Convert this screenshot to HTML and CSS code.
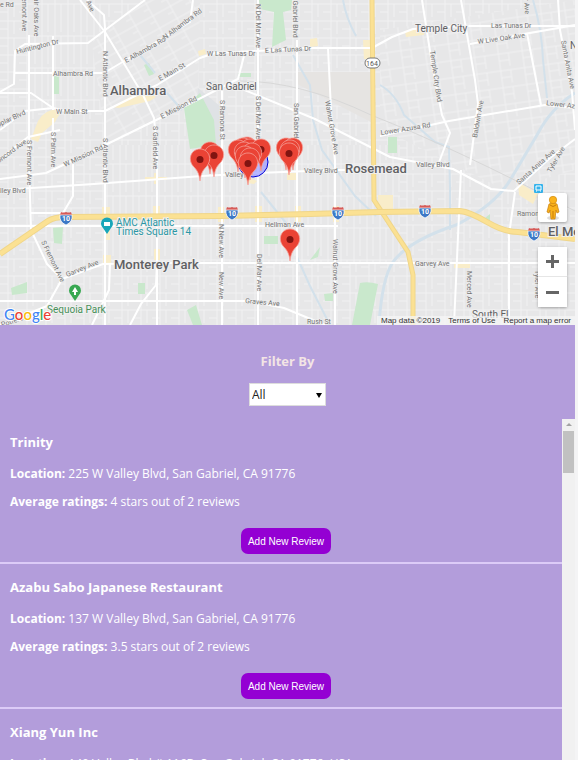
FILE: index.html
```html
<!DOCTYPE html>
<html lang="en">
<head>
<meta charset="utf-8">
<meta name="viewport" content="width=device-width, initial-scale=1">
<title>Restaurant Reviews</title>
<link rel="stylesheet" href="styles.css">
</head>
<body>
<main class="app">
  <section class="map" aria-label="Map">
    <svg class="map-canvas" viewBox="0 0 575 325" preserveAspectRatio="xMidYMid slice">
      <defs>
        <pattern id="grid" width="19" height="17" patternUnits="userSpaceOnUse">
          <path d="M0 4H19M8 0V17M14 4V17M0 12H8" class="local"/>
        </pattern>
        <pattern id="gridAlhambra" width="20" height="14" patternUnits="userSpaceOnUse" patternTransform="rotate(-29)">
          <path d="M0 4H20M6 0V14M0 10H6" class="local"/>
        </pattern>
        <pattern id="gridTemple" width="24" height="17" patternUnits="userSpaceOnUse" patternTransform="rotate(-8)">
          <path d="M0 4H24M6 0V17M16 4V17M6 11H16" class="local"/>
        </pattern>
        <pattern id="gridTall" width="13" height="32" patternUnits="userSpaceOnUse">
          <path d="M0 4H13M3 0V32M9 4V32" class="local"/>
        </pattern>
        <g id="pin">
          <path d="M0 0C-1-8-3-11-7-15C-13-23-8-32 0-32S13-23 7-15C3-11 1-8 0 0Z" fill="#ea4335" stroke="#f5a29b" stroke-width=".8"/>
          <circle cy="-21.500" r="3.500" fill="#811411"/>
        </g>
        <g id="shield">
          <path d="M-5-6Q-3-5 0-6Q3-5 5-6L6-3H-6Z" fill="#d65a57"/>
          <path d="M-6-3H6Q7 4 0 7Q-7 4-6-3Z" fill="#3d78c6" stroke="#fff" stroke-width=".7"/>
          <text y="3" class="shield-text">10</text>
        </g>
      </defs>

      <rect width="575" height="325" fill="#e7e7e8"/>
      <path d="M0 0H575V325H0Z" fill="url(#grid)"/>
      <path d="M106 145H400V262H106ZM30 0H105V110H30Z" fill="#e7e7e8"/>
      <path d="M106 145H400V262H106ZM30 0H105V110H30Z" fill="url(#gridTall)"/>
      <path d="M92 43L145 0H200L198 100L106 145Z" fill="#e7e7e8"/>
      <path d="M92 43L145 0H200L198 100L106 145Z" fill="url(#gridAlhambra)"/>
      <path d="M380 30L575 0V170L505 190L380 128Z" fill="#e7e7e8"/>
      <path d="M380 30L575 0V170L505 190L380 128Z" fill="url(#gridTemple)"/>
      <path d="M297 72H371V122L297 84Z" fill="#e6e4e2"/>
      <path d="M198 88L221 107V145H195Z" fill="#dfe2e5"/>

      <g fill="#c9e8cc">
        <path d="M259 0H292L291 10L283 12L286 40L272 47L274 12L260 9Z"/>
        <path d="M184 108L200 93L214 120L216 145L190 149Z"/>
        <path d="M54 76H59V94H54ZM144 65L149 63L154 74L149 76ZM53 228L63 227L62 244L54 243ZM11 288L27 282V293L12 295ZM138 283H145V294H138ZM187 310L196 305L202 325H193ZM264 236H278V244H264ZM310 260L320 247L318 257ZM324 294L333 293V301L325 301ZM388 137H397V153H388ZM238 73H251V77H238Z"/>
        <path d="M360 283Q368 281 378 284L370 325H352ZM485 218L490 214V221Z"/>
      </g>
      <g fill="#f9edc9">
        <path d="M38 121Q46 107 62 110L55 122L42 133L38 142L31 139Z"/>
        <path d="M113 107L136 93L151 93L156 97L150 101L119 108Z"/>
        <path d="M310 39L317 38L318 46L310 47ZM363 40H371V59H364ZM405 31L424 27V35L406 37ZM198 51L205 49L206 54L199 56ZM378 195H393V210H378ZM518 182L538 194L533 204L519 195ZM287 173H297V180H287ZM247 177L257 181L254 184L247 183Z"/>
        <path d="M102 207H110V222H102ZM153 206H160V222H153ZM218 207H224V222H218ZM255 206H262V222H255ZM295 206H301V222H295ZM333 206H339V222H333ZM103 255H111V265H103ZM154 249H160V260H154ZM145 177H167V180H145ZM154 173H158V184H154ZM104 229H110V240H104ZM454 262H470V268H454Z"/>
      </g>

      <g class="water">
        <path d="M343 0Q346 18 356 36"/>
        <path d="M293 55L310 85L313 120L322 150L355 196L376 216"/>
        <path d="M380 85Q396 94 404 115L435 142L449 147L450 188V230"/>
        <path d="M533 0Q542 30 543 60L547 98"/>
        <path d="M297 257L310 286L330 325M261 192L290 228"/>
        <path d="M140 55L155 73M167 93L182 110"/>
        <path d="M575 93Q551 108 537 135Q521 162 512 177Q497 204 456 225Q408 241 393 262Q382 278 379 325" stroke-width="3"/>
      </g>
      <path d="M240 81Q300 81 371 115Q455 148 575 211" class="rail"/>

      <g class="road">
        <path d="M0 92L14 84L15 51L25 44L88 43L145 0"/>
        <path d="M29 35V163L31 230L47 264L62 279M53 36V110M53 118V165"/>
        <path d="M87 0L104 15L105 28V325M80 0L105 32L143 95L154 118L157 150V325"/>
        <path d="M15 73H104L190 22L193 0"/>
        <path d="M0 93H31L53 108L66 111H105L157 85L200 58L215 53L258 51L305 48H372L392 37L413 29L463 26H575"/>
        <path d="M0 130L25 111L53 108M0 159L28 137L60 130"/>
        <path d="M0 179L46 173L95 150L197 100L238 79L245 52"/>
        <path d="M0 190L94 184L202 176L258 173L333 170L372 170"/>
        <path d="M242 89L315 119L390 157L453 169L491 189L514 191L550 158L575 139"/>
        <path d="M222 91V325M258 0V325M297 40V325M328 48L332 130L335 160V325"/>
        <path d="M422 0L432 64L442 115L450 133L438 165M461 0L475 80L478 104L470 165M461 170L454 325"/>
        <path d="M470 44L530 33L575 25M380 136L449 121L545 105L575 108"/>
        <path d="M527 33L541 105M558 0L560 30L572 92L575 130"/>
        <path d="M515 192L509 235V325M62 279L103 264L157 263H575"/>
        <path d="M30 213L63 213L73 196V160M0 226H338M157 263L156 285L141 304L130 325M110 264L109 290L92 325M62 279L47 306L0 325"/>
        <path d="M0 301H250L284 308L325 325"/>
      </g>

      <path d="M372 0L374 200L408 252L413 275V325" class="highway-edge"/>
      <path d="M372 0L374 200L408 252L413 275V325" class="highway"/>
      <path d="M0 254L48 221Q54 217 66 217L220 216L310 214L380 212L460 211Q470 212 487 222T518 232L575 239" class="highway-edge wide"/>
      <path d="M0 254L48 221Q54 217 66 217L220 216L310 214L380 212L460 211Q470 212 487 222T518 232L575 239" class="highway broad"/>

      <g class="label">
        <text x="0" y="7">e Rd</text>
        <text transform="translate(22 -8) rotate(90)">Fremont Ave</text>
        <text transform="translate(34 -6) rotate(90)">Fair Oaks Ave</text>
        <text transform="translate(82 -7) rotate(66)">nd Ave</text>
        <text transform="translate(17 54) rotate(-14)">Huntington Dr</text>
        <text x="53" y="76">Alhambra Rd</text>
        <text x="56" y="114">W Main St</text>
        <text transform="translate(-6 129) rotate(-25)">Poplar Blvd</text>
        <text transform="translate(-5 166) rotate(-36)">Concord Ave</text>
        <text transform="translate(27 140) rotate(90)">S Fremont Ave</text>
        <text transform="translate(51 132) rotate(90)">S Palm Ave</text>
        <text transform="translate(103 51) rotate(90)">N Atlantic Blvd</text>
        <text transform="translate(103 138) rotate(90)">S Atlantic Blvd</text>
        <text transform="translate(126 63) rotate(-29)">E Alhambra Rd</text>
        <text transform="translate(165 40) rotate(-37)">N Alhambra Rd</text>
        <text transform="translate(160 81) rotate(-29)">E Main St</text>
        <text transform="translate(162 119) rotate(-28)">E Mission Rd</text>
        <text transform="translate(65 167) rotate(-25)">W Mission Rd</text>
        <text transform="translate(153 126) rotate(90)">S Garfield Ave</text>
        <text x="207" y="56">W Las Tunas Dr</text>
        <text transform="translate(265 53) rotate(-3)">E Las Tunas Dr</text>
        <text transform="translate(256 4) rotate(90)">N Del Mar Ave</text>
        <text transform="translate(293 -13) rotate(90)">San Gabriel Blvd</text>
        <text transform="translate(220 100) rotate(90)">S Ramona St</text>
        <text transform="translate(256 96) rotate(90)">S Del Mar Ave</text>
        <text transform="translate(294 103) rotate(90)">San Gabriel Blvd</text>
        <text transform="translate(325 101) rotate(80)">Walnut Grove Ave</text>
        <text x="491" y="28">Las Tunas Dr</text>
        <text transform="translate(478 44) rotate(-8)">W Live Oak Ave</text>
        <text transform="translate(430 51) rotate(82)">Temple City Blvd</text>
        <text transform="translate(477 138) rotate(-80)">Baldwin Ave</text>
        <text transform="translate(561 41) rotate(79)">Santa Anita Ave</text>
        <text transform="translate(523 -14) rotate(86)">Tyler Ave</text>
        <text transform="translate(381 135) rotate(-9)">Lower Azusa Rd</text>
        <text transform="translate(546 105) rotate(7)">Lower Azusa</text>
        <text transform="translate(519 185) rotate(-42)">Santa Anita Ave</text>
        <text transform="translate(551 173) rotate(-60)">Tyler Ave</text>
        <text x="416" y="167">Valley Blvd</text>
        <text x="304" y="173">Valley Blvd</text>
        <text x="225" y="177">Valley</text>
        <text x="-8" y="193">Valley Blvd</text>
        <text x="265" y="227">Hellman Ave</text>
        <text x="517" y="216">Ramona Blvd</text>
        <text x="415" y="266">Garvey Ave</text>
        <text transform="translate(67 277) rotate(-22)">Garvey Ave</text>
        <text transform="translate(41 242) rotate(64)">S Fremont Ave</text>
        <text transform="translate(219 224) rotate(90)">N New Ave</text>
        <text transform="translate(219 272) rotate(90)">New Ave</text>
        <text transform="translate(257 254) rotate(90)">Del Mar Ave</text>
        <text transform="translate(333 239) rotate(90)">Walnut Grove Ave</text>
        <text transform="translate(467 271) rotate(90)">Merced Ave</text>
        <text transform="translate(535 270) rotate(90)">Tyler Ave</text>
        <text transform="translate(245 303) rotate(5)">Graves Ave</text>
        <text x="307" y="324">Rush St</text>
        <text transform="translate(2 327) rotate(-18)">Potrero</text>
      </g>
      <g class="town">
        <text x="110" y="95" class="city">Alhambra</text>
        <text x="206" y="90">San Gabriel</text>
        <text x="415" y="32">Temple City</text>
        <text x="345" y="173" class="city">Rosemead</text>
        <text x="114" y="269" class="city">Monterey Park</text>
        <text x="548" y="236" class="city">El Monte</text>
        <text x="570" y="49">N</text>
        <text x="472" y="318">South El</text>
      </g>
      <g class="place">
        <text x="116" y="226">AMC Atlantic</text>
        <text x="116" y="235">Times Square 14</text>
        <text x="47" y="313" class="park">Sequoia Park</text>
      </g>

      <path d="M107 234L103 228A6 6 0 1 1 111 228Z" fill="#18a6b9"/>
      <path d="M104 222H110V226H104Z" fill="#fff"/>
      <path d="M75 301L71 295A6 6 0 1 1 79 295Z" fill="#38a852"/>
      <path d="M75 287L78 292H76V295H74V292H72Z" fill="#fff"/>
      <rect x="534" y="184" width="9" height="9" rx="1" fill="#35b3ec"/>
      <path d="M536 186H541V190H536ZM536 191H537M540 191H541" fill="none" stroke="#fff"/>
      <rect x="365" y="58" width="15" height="10" rx="5" fill="#fff" stroke="#777"/>
      <text x="372" y="66" class="route">164</text>
      <use href="#shield" x="66" y="218"/>
      <use href="#shield" x="232" y="213"/>
      <use href="#shield" x="338" y="213"/>
      <use href="#shield" x="425" y="211"/>
      <use href="#shield" x="534" y="234"/>

      <circle cx="253" cy="162" r="15" fill="#99f" fill-opacity=".7" stroke="#0000d8"/>
      <use href="#pin" x="210" y="174"/>
      <use href="#pin" x="214" y="177"/>
      <use href="#pin" x="200" y="181"/>
      <use href="#pin" x="247" y="169"/>
      <use href="#pin" x="243" y="170"/>
      <use href="#pin" x="238" y="172"/>
      <use href="#pin" x="250" y="171"/>
      <use href="#pin" x="261" y="171"/>
      <use href="#pin" x="244" y="174"/>
      <use href="#pin" x="252" y="175"/>
      <use href="#pin" x="245" y="178"/>
      <use href="#pin" x="250" y="180"/>
      <use href="#pin" x="248" y="185"/>
      <use href="#pin" x="286" y="170"/>
      <use href="#pin" x="293" y="170"/>
      <use href="#pin" x="290" y="172"/>
      <use href="#pin" x="289" y="175"/>
      <use href="#pin" x="290" y="261"/>

      <text x="4" y="320" class="logo"><tspan fill="#4285f4">G</tspan><tspan fill="#ea4335">o</tspan><tspan fill="#fbbc05">o</tspan><tspan fill="#4285f4">g</tspan><tspan fill="#34a853">l</tspan><tspan fill="#ea4335">e</tspan></text>
    </svg>

    <div class="map-controls">
      <button class="control pegman" type="button" aria-label="Street View">
        <svg width="16" height="26" viewBox="0 0 16 26">
          <ellipse cx="8" cy="23" rx="6" ry="2" fill="#ddd"/>
          <path d="M4 9Q8 7 12 9L14 17L12 18L11 15L10 24H6L5 15L4 18L2 17Z" fill="#f9b21c" stroke="#c77c0a" stroke-width=".7"/>
          <circle cx="8" cy="5" r="3.700" fill="#fbb31b" stroke="#d18b12" stroke-width=".7"/>
          <path d="M5 10Q8 13 11 10M8 16V23" fill="none" stroke="#c77c0a"/>
        </svg>
      </button>
      <div class="zoom">
        <button class="control" type="button" aria-label="Zoom in">
          <svg width="13" height="13" viewBox="0 0 13 13"><path d="M0 6.500H13M6.500 0V13" stroke="#666" stroke-width="3"/></svg>
        </button>
        <button class="control" type="button" aria-label="Zoom out">
          <svg width="13" height="13" viewBox="0 0 13 13"><path d="M0 6.500H13" stroke="#666" stroke-width="3"/></svg>
        </button>
      </div>
    </div>
    <footer class="map-credits">
      <span>Map data ©2019</span>
      <a href="#">Terms of Use</a>
      <a href="#">Report a map error</a>
    </footer>
  </section>

  <section class="filter">
    <label class="filter-title" for="rating">Filter By</label>
    <div class="select-wrap">
      <select id="rating" class="filter-select"><option>All</option></select>
    </div>
  </section>

  <section class="results">
    <div class="list">
      <article class="card">
        <h2 class="name">Trinity</h2>
        <p class="detail"><b>Location:</b> 225 W Valley Blvd, San Gabriel, CA 91776</p>
        <p class="detail"><b>Average ratings:</b> 4 stars out of 2 reviews</p>
        <button class="review" type="button">Add New Review</button>
      </article>
      <article class="card">
        <h2 class="name">Azabu Sabo Japanese Restaurant</h2>
        <p class="detail"><b>Location:</b> 137 W Valley Blvd, San Gabriel, CA 91776</p>
        <p class="detail"><b>Average ratings:</b> 3.5 stars out of 2 reviews</p>
        <button class="review" type="button">Add New Review</button>
      </article>
      <article class="card">
        <h2 class="name">Xiang Yun Inc</h2>
        <p class="detail"><b>Location:</b> 140 Valley Blvd # 116B, San Gabriel, CA 91776, USA</p>
      </article>
    </div>
    <div class="track" aria-hidden="true">
      <div class="track-arrow"></div>
      <div class="track-thumb"></div>
    </div>
  </section>
</main>
</body>
</html>
```
FILE: styles.css
```css
* { box-sizing: border-box; }

body {
  margin: 0;
  background: #f4f4f5;
  font-family: "Open Sans", "Noto Sans", sans-serif;
  font-size: 12px;
  color: #fff;
}

.app {
  display: flex;
  flex-direction: column;
  height: 100vh;
  margin-right: 3px;
  background: #b39ddb;
}

.map {
  position: relative;
  flex: none;
  height: 325px;
  font-family: Roboto, sans-serif;
}

.map-canvas { display: block; width: 100%; height: 100%; }

.local { fill: none; stroke: #f1f1f2; stroke-width: 1; }
.water { fill: none; stroke: #d3e1eb; stroke-width: 2; }
.rail { fill: none; stroke: #d8d8d8; }
.road { fill: none; stroke: #fff; stroke-width: 2; stroke-linejoin: round; }
.highway-edge { fill: none; stroke: #f0d68a; stroke-width: 5; }
.highway { fill: none; stroke: #fbe193; stroke-width: 3; }
.wide { stroke-width: 6; }
.broad { stroke-width: 4; }

.label { font-size: 7px; fill: #747474; stroke: #f0f0f0; stroke-width: 1; paint-order: stroke; }
.town { font-size: 10px; fill: #5f6063; stroke: #f0f0f0; stroke-width: 2; paint-order: stroke; }
.city { font-size: 13px; font-weight: 500; }
.place { font-size: 10px; fill: #2b96a5; stroke: #f0f0f0; stroke-width: 2; paint-order: stroke; }
.park { fill: #49905a; }
.route { font-size: 7px; fill: #555; text-anchor: middle; }
.shield-text { font-size: 7px; font-weight: 700; fill: #fff; text-anchor: middle; }
.logo { font-family: Lato, sans-serif; font-size: 15px; font-weight: 500; stroke: #fff; stroke-width: 2; paint-order: stroke; }

.map-controls {
  position: absolute;
  right: 8px;
  bottom: 18px;
  display: flex;
  flex-direction: column;
  gap: 25px;
}

.control {
  display: flex;
  align-items: center;
  justify-content: center;
  width: 29px;
  height: 29px;
  padding: 0;
  border: 0;
  background: #fff;
}

.pegman, .zoom { border-radius: 2px; box-shadow: 0 1px 3px rgba(0, 0, 0, .3); }
.zoom .control + .control { height: 31px; border-top: 1px solid #e6e6e6; }
.zoom { background: #fff; }

.map-credits {
  position: absolute;
  right: 0;
  bottom: 0;
  display: flex;
  gap: 8px;
  padding: 0 4px;
  background: rgba(245, 245, 245, .75);
  font-family: "Liberation Sans", sans-serif;
  font-size: 8px;
  line-height: 9px;
  color: #333;
}

.map-credits a { color: inherit; text-decoration: none; }

.filter {
  display: flex;
  flex: none;
  flex-direction: column;
  align-items: center;
  gap: 12px;
  padding: 26px 0 13px;
}

.filter-title { font-size: 13px; font-weight: 700; line-height: 20px; color: #f3e5e5; }

.select-wrap { position: relative; }

.select-wrap::after {
  content: "";
  position: absolute;
  top: 10px;
  right: 4px;
  border: solid transparent;
  border-width: 5px 3px 0;
  border-top-color: #000;
  pointer-events: none;
}

.filter-select {
  display: block;
  width: 77px;
  height: 23px;
  padding: 0 2px;
  border: 1px solid #ddd;
  border-radius: 0;
  background: #fff;
  font: inherit;
  color: #222;
  appearance: none;
}

.results { display: flex; flex: 1; min-height: 0; }
.list { flex: 1; overflow-y: auto; scrollbar-width: none; }

.card {
  display: flex;
  flex-direction: column;
  padding: 13px 0 8px 10px;
  border-bottom: 2px solid #dccbf7;
}

.name { margin: 0 0 14px; font-size: 13px; font-weight: 700; line-height: 20px; }
.detail { margin: 0 0 12px; line-height: 16px; }

.review {
  align-self: center;
  height: 26px;
  margin-top: 6px;
  padding: 0 7px;
  border: 0;
  border-radius: 7px;
  background: #9400d3;
  font-family: "Liberation Sans", sans-serif;
  font-size: 10px;
  color: #fff;
}

.track { width: 13px; padding: 0 1px; background: #f1f1f1; }
.track-arrow { height: 12px; }

.track-arrow::before {
  content: "";
  display: block;
  width: 0;
  margin: 0 auto;
  border: solid transparent;
  border-width: 4px 3px 3px;
  border-bottom-color: #a3a3a3;
}

.track-thumb { height: 42px; background: #c1c1c1; }
```
